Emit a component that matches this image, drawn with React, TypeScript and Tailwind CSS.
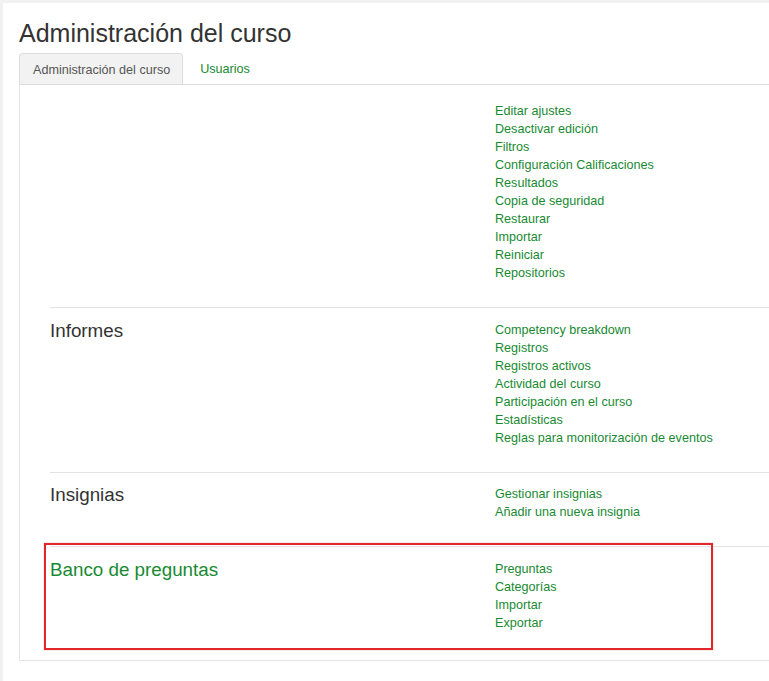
import React from "react";

const sections: { title: string; green?: boolean; links: string[]; pt: string; pb: string; border: boolean }[] = [
  {
    title: "",
    links: [
      "Editar ajustes",
      "Desactivar edición",
      "Filtros",
      "Configuración Calificaciones",
      "Resultados",
      "Copia de seguridad",
      "Restaurar",
      "Importar",
      "Reiniciar",
      "Repositorios",
    ],
    pt: "pt-[17px]",
    pb: "pb-[25px]",
    border: false,
  },
  {
    title: "Informes",
    links: [
      "Competency breakdown",
      "Registros",
      "Registros activos",
      "Actividad del curso",
      "Participación en el curso",
      "Estadísticas",
      "Reglas para monitorización de eventos",
    ],
    pt: "pt-[13px]",
    pb: "pb-[25px]",
    border: true,
  },
  {
    title: "Insignias",
    links: ["Gestionar insignias", "Añadir una nueva insignia"],
    pt: "pt-[12px]",
    pb: "pb-[25px]",
    border: true,
  },
  {
    title: "Banco de preguntas",
    green: true,
    links: ["Preguntas", "Categorías", "Importar", "Exportar"],
    pt: "pt-[13px]",
    pb: "pb-[28px]",
    border: true,
  },
];

export default function App() {
  return (
    <div
      className="relative w-[769px] h-[681px] overflow-hidden bg-[#f1f1f1] pt-[3px] pl-[3px]"
      style={{ fontFamily: '"Liberation Sans", Arial, sans-serif' }}
    >
      <div className="h-full w-[1100px] bg-white pl-[16px]">
        <h2 className="pt-[15px] text-[25px] leading-[30px] text-[#333] font-normal">
          Administración del curso
        </h2>
        <div className="mt-[5px] w-[900px]">
          <div className="flex border-b border-[#dddddd] h-[32px]">
            <div className="flex h-[31px] items-center rounded-t-[4px] border border-b-0 border-[#dddddd] bg-[#f2f2f2] pt-[2px] pl-[13px] pr-[12px] text-[12.6px] text-[#555]">
              Administración del curso
            </div>
            <div className="flex h-[31px] items-center pt-[2px] pl-[17px] text-[12.6px] text-[#188a32]">
              Usuarios
            </div>
          </div>
          <div className="border-l border-b border-[#e6e6e6] px-[30px]">
            {sections.map((s, i) => (
              <div
                key={i}
                className={`flex ${s.pt} ${s.pb} ${s.border ? "border-t border-[#e3e3e3]" : ""}`}
              >
                <div className="w-[445px] shrink-0">
                  {s.title && (
                    <div
                      className={`-mt-px text-[18.8px] leading-[22px] ${
                        s.green ? "text-[#188a32]" : "text-[#333]"
                      }`}
                    >
                      {s.title}
                    </div>
                  )}
                </div>
                <div className="flex flex-col">
                  {s.links.map((l) => (
                    <div key={l} className="text-[12.6px] leading-[18px] text-[#188a32]">
                      {l}
                    </div>
                  ))}
                </div>
              </div>
            ))}
          </div>
        </div>
      </div>
      <div className="absolute left-[44px] top-[543px] w-[669px] h-[107px] border-2 border-[#e1262c] shadow-[0_0_1px_#f08080]" />
    </div>
  );
}
